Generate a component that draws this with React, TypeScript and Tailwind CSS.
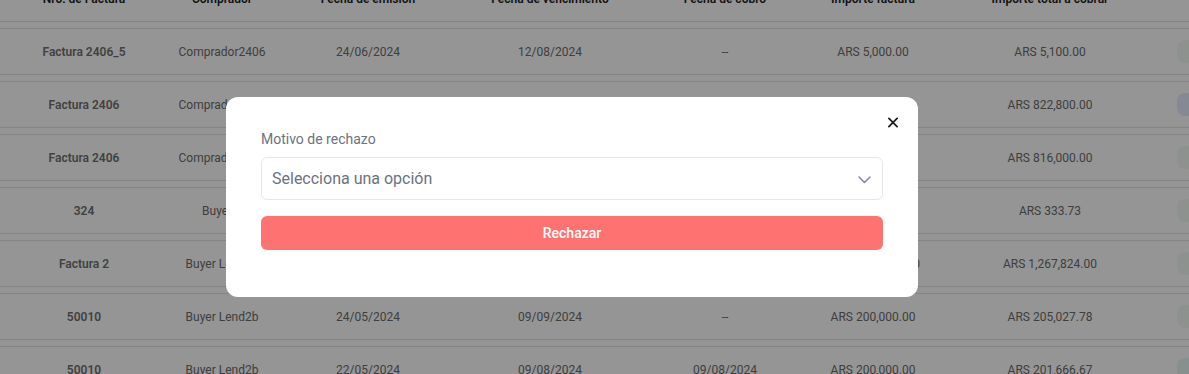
import React from "react";

type Row = {
  c: string[];
  badge: string;
};

const rows: Row[] = [
  { c: ["Factura 2406_5", "Comprador2406", "24/06/2024", "12/08/2024", "--", "ARS 5,000.00", "ARS 5,100.00"], badge: "bg-[#f3faf3]" },
  { c: ["Factura 2406", "Comprador2406", "24/06/2024", "12/08/2024", "--", "ARS 800,000.00", "ARS 822,800.00"], badge: "bg-[#e2ebfb]" },
  { c: ["Factura 2406", "Comprador2406", "24/06/2024", "12/08/2024", "--", "ARS 800,000.00", "ARS 816,000.00"], badge: "bg-[#f3faf3]" },
  { c: ["324", "Buyer 1", "24/06/2024", "12/08/2024", "--", "ARS 320.00", "ARS 333.73"], badge: "bg-[#f3faf3]" },
  { c: ["Factura 2", "Buyer Lend2b", "24/05/2024", "12/08/2024", "--", "ARS 1,240,000.00", "ARS 1,267,824.00"], badge: "bg-[#f3faf3]" },
  { c: ["50010", "Buyer Lend2b", "24/05/2024", "09/09/2024", "--", "ARS 200,000.00", "ARS 205,027.78"], badge: "bg-[#f3faf3]" },
  { c: ["50010", "Buyer Lend2b", "22/05/2024", "09/08/2024", "09/08/2024", "ARS 200,000.00", "ARS 201,666.67"], badge: "bg-[#e8f7f4]" },
];

const headers = [
  "Nro. de Factura",
  "Comprador",
  "Fecha de emisión",
  "Fecha de vencimiento",
  "Fecha de cobro",
  "Importe factura",
  "Importe total a cobrar",
];

const gridCols = "grid grid-cols-[168px_108px_184px_180px_170px_126px_228px_1fr]";

export default function App() {
  return (
    <div className="relative w-[1189px] h-[374px] overflow-hidden bg-white font-['Roboto',sans-serif]">
      <div className="mt-[-24px]">
        <div className={`${gridCols} h-[46px] items-center border-b border-[#e2e2e2] text-xs font-semibold text-[#222222]`}>
          {headers.map((h) => (
            <div key={h} className="text-center whitespace-nowrap">{h}</div>
          ))}
          <div />
        </div>
        {rows.map((r, i) => (
          <div
            key={i}
            className={`${gridCols} mt-[6px] h-[47px] items-center border-y border-[#e2e2e2] text-xs text-[#6c6c6c]`}
          >
            {r.c.map((t, j) => (
              <div key={j} className={`text-center whitespace-nowrap ${j === 0 ? "font-semibold text-[#707070]" : ""}`}>
                {t}
              </div>
            ))}
            <div className="pl-[13px]">
              <div className={`h-[23px] w-[80px] rounded-lg ${r.badge}`} />
            </div>
          </div>
        ))}
      </div>

      <div className="absolute inset-0 bg-[rgba(0,0,0,0.415)]" />

      <div className="absolute left-[226px] top-[97px] w-[692px] h-[200px] rounded-xl bg-white px-[35px] pt-[32px] font-['Roboto',sans-serif]">
        <button className="absolute left-[662px] top-[20px] flex h-[10px] w-[10px] items-center justify-center">
          <svg width="11" height="11" viewBox="0 0 11 11" fill="none">
            <path d="M1 1L10 10M10 1L1 10" stroke="#1f1f1f" strokeWidth="2" strokeLinecap="round" />
          </svg>
        </button>
        <div className="text-sm leading-5 text-[#6b7280]">Motivo de rechazo</div>
        <div className="relative mt-[8px] flex h-[43px] items-center rounded-md border border-[#e5e7eb] pl-[10px]">
          <span className="text-base text-[#6b7280]">Selecciona una opción</span>
          <svg className="absolute right-[11px] top-[18px]" width="13" height="8" viewBox="0 0 13 8" fill="none">
            <path d="M1 1L6.5 6.5L12 1" stroke="#8584a8" strokeWidth="1.5" strokeLinecap="round" strokeLinejoin="round" />
          </svg>
        </div>
        <button className="mt-[16px] flex h-[34px] w-full items-center justify-center rounded-md bg-[#ff7272] text-sm font-medium text-white">
          Rechazar
        </button>
      </div>
    </div>
  );
}
